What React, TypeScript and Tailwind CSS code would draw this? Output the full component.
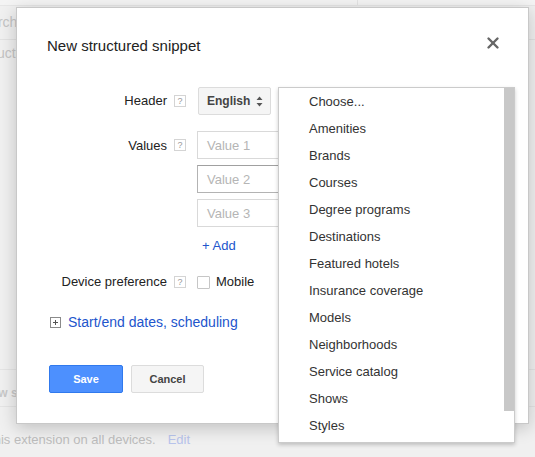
import { X } from "lucide-react";

const options = [
  "Choose...",
  "Amenities",
  "Brands",
  "Courses",
  "Degree programs",
  "Destinations",
  "Featured hotels",
  "Insurance coverage",
  "Models",
  "Neighborhoods",
  "Service catalog",
  "Shows",
  "Styles",
];

const Help = () => (
  <span className="w-[12px] h-[12px] border border-[#d4d4d4] bg-white text-[9px] leading-[10px] text-[#999] text-center shrink-0">
    ?
  </span>
);

export default function App() {
  return (
    <div
      className="relative w-[535px] h-[457px] overflow-hidden bg-[#f0f0f0] text-[#222]"
      style={{ fontFamily: '"Liberation Sans", Arial, sans-serif' }}
    >
      <div className="flex flex-col text-[#c4c4c4] text-[14px]">
        <div className="h-[6px] border-b border-[#e6e6e6] bg-[#f4f4f4] flex">
          <div className="ml-[357px] border-l border-[#e4e4e4]" />
        </div>
        <div className="h-[34px] flex items-center border-b border-[#e2e2e2]">
          <div className="w-[16px] overflow-hidden whitespace-nowrap">
            <span className="-ml-[27px] inline-block">Search</span>
          </div>
        </div>
        <div className="h-[26px] flex items-center">
          <div className="w-[16px] overflow-hidden whitespace-nowrap">
            <span className="-ml-[21px] inline-block">Structured</span>
          </div>
        </div>
        <div className="h-[303px]" />
        <div className="h-[38px] border-t border-b border-[#e4e4e4] flex items-center pt-[9px]">
          <div className="w-[16px] overflow-hidden whitespace-nowrap text-[12px] font-bold text-[#c8c8c8]">
            <span className="-ml-[17px] inline-block">New structured</span>
          </div>
        </div>
        <div className="h-[66px] flex items-center text-[13px] text-[#bdbdbd] whitespace-nowrap">
          <span className="-ml-[46px]">Show this extension on all devices.</span>
          <span className="ml-[12px] text-[#b8c4ec]">Edit</span>
        </div>
      </div>

      {/* dialog */}
      <div className="absolute left-[16px] top-[7px] w-[513px] h-[417px] bg-white border border-[#c8c8c8] shadow-[0_4px_16px_rgba(0,0,0,0.2)] pt-[29px] px-[30px]">
        <div className="text-[15px] leading-[18px] text-[#222]">New structured snippet</div>
        <button className="absolute right-[26px] top-[26px] text-[#666]">
          <X size={18} strokeWidth={3.2} />
        </button>

        <div className="mt-[32px] flex flex-col text-[13px]">
          {/* header */}
          <div className="flex items-center h-[28px]">
            <div className="w-[120px] text-right">Header</div>
            <span className="ml-[7px] flex"><Help /></span>
            <div className="ml-[12px] w-[73px] h-[28px] border border-[#dcdcdc] bg-[#f5f5f5] rounded-[2px] flex items-center pl-[8px] pr-[7px] justify-between">
              <span className="text-[12px] font-bold text-[#444]">English</span>
              <svg width="7" height="11" viewBox="0 0 7 11" className="text-[#555]">
                <path d="M3.5 0.5 L6.5 4 H0.5 Z M3.5 10.5 L6.5 7 H0.5 Z" fill="currentColor" />
              </svg>
            </div>
          </div>

          {/* values */}
          <div className="flex items-start mt-[16px]">
            <div className="w-[120px] text-right leading-[28px] pt-[1px]">Values</div>
            <span className="ml-[7px] mt-[8px] flex"><Help /></span>
            <div className="ml-[11px] flex flex-col gap-[6px]">
              <div className="w-[200px] h-[28px] border border-[#d9d9d9] flex items-center pl-[9px] pt-[1px] text-[#b5b5b5]">Value 1</div>
              <div className="w-[200px] h-[28px] border border-[#b3b3b3] border-t-[#a0a0a0] flex items-center pl-[9px] pt-[1px] text-[#b5b5b5]">Value 2</div>
              <div className="w-[200px] h-[28px] border border-[#d9d9d9] flex items-center pl-[9px] pt-[1px] text-[#b5b5b5]">Value 3</div>
              <div className="mt-[4px] pl-[5px] h-[18px] leading-[18px] text-[#2255cc]">+ Add</div>
            </div>
          </div>

          {/* device preference */}
          <div className="flex items-center h-[20px] mt-[17px]">
            <div className="w-[120px] text-right">Device preference</div>
            <span className="ml-[7px] flex"><Help /></span>
            <span className="ml-[11px] w-[13px] h-[13px] border border-[#c6c6c6] rounded-[1px] bg-white" />
            <span className="ml-[6px]">Mobile</span>
          </div>

          {/* scheduling */}
          <div className="flex items-center h-[20px] mt-[20px] pl-[3px]">
            <svg width="11" height="11" viewBox="0 0 11 11" className="shrink-0">
              <rect x="0.5" y="0.5" width="10" height="10" fill="white" stroke="#8a8a8a" />
              <path d="M3 5.5 H8 M5.5 3 V8" stroke="#555" strokeWidth="1" />
            </svg>
            <span className="ml-[7px] text-[14px] text-[#2255cc]">Start/end dates, scheduling</span>
          </div>

          {/* actions */}
          <div className="flex gap-[8px] mt-[33px] pl-[2px]">
            <button className="w-[74px] h-[28px] rounded-[2px] bg-[#4d90fe] border border-[#3079ed] text-white text-[11px] font-bold">
              Save
            </button>
            <button className="w-[73px] h-[28px] rounded-[2px] bg-[#f5f5f5] border border-[#dcdcdc] text-[#444] text-[11px] font-bold">
              Cancel
            </button>
          </div>
        </div>
      </div>

      {/* open select list */}
      <div className="absolute left-[278px] top-[87px] w-[237px] h-[356px] bg-white border border-[#cbcbcb] shadow-[0_2px_4px_rgba(0,0,0,0.2)] flex">
        <ul className="flex-1 flex flex-col text-[13px] text-[#333]">
          {options.map((o) => (
            <li key={o} className="h-[27px] leading-[27px] pl-[30px]">
              {o}
            </li>
          ))}
        </ul>
        <div className="w-[10px] h-[323px] bg-[#c8c8c8]" />
      </div>
    </div>
  );
}
